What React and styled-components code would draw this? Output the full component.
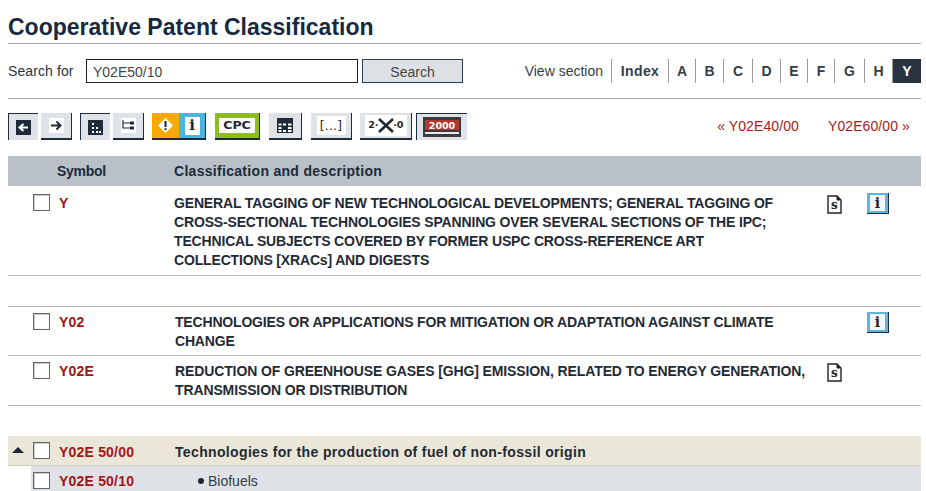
import React from "react";
import styled, { createGlobalStyle } from "styled-components";

const Global = createGlobalStyle`
  html, body { margin: 0; padding: 0; background: #fff; overflow: hidden; }
  body { font-family: "Liberation Sans", Arial, sans-serif; color: #1f2a36; }
`;
const Page = styled.div`
  width: 913px; height: 491px; overflow: hidden; margin-left: 8px;
`;
const Title = styled.h1`
  margin: 0; height: 44px; box-sizing: border-box; padding-top: 14px;
  font-size: 23px; line-height: 27px; font-weight: 700; color: #15293f;
  border-bottom: 1px solid #aaa;
  white-space: nowrap;
`;
const SearchBar = styled.div`
  height: 55px; box-sizing: border-box; border-bottom: 1px solid #aaa;
  display: flex; align-items: flex-start; padding-top: 15px;
`;
const SearchLabel = styled.span`
  width: 78px; font-size: 14px; line-height: 24px; height: 24px; letter-spacing: 0.1px; color: #2a3440;
`;
const SearchInput = styled.div`
  width: 272px; height: 24px; box-sizing: border-box; border: 1px solid #15202b;
  font-size: 14px; line-height: 24px; padding-left: 6px; color: #444;
`;
const SearchButton = styled.div`
  margin-left: 4px; width: 101px; height: 24px; box-sizing: border-box;
  border: 1px solid #2c3e50; background: #dde1e6; color: #444;
  font-size: 14px; line-height: 24px; text-align: center;
`;
const Sections = styled.div`
  margin-left: auto; display: flex; align-items: center; height: 24px;
`;
const SectionLabel = styled.span`
  font-size: 14px; color: #333d48; padding-right: 8px; line-height: 25px;
  border-right: 1px solid #999; height: 24px;
`;
const SectionLink = styled.span`
  font-size: 14px; font-weight: 700; height: 24px; line-height: 25px; text-align: center;
  box-sizing: border-box; width: ${p => p.$w}px; letter-spacing: ${p => p.$sp || 0}px;
  color: ${p => (p.$active ? "#fff" : "#333d48")};
  background: ${p => (p.$active ? "#2a3340" : "transparent")};
  border-right: ${p => (p.$active ? "0" : "1px solid #999")};
`;
const ToolRow = styled.div`
  height: 57px; box-sizing: border-box; padding-top: 14px; display: flex; align-items: flex-start;
`;
const Tool = styled.div`
  height: 27px; box-sizing: border-box; width: ${p => p.$w}px; margin-left: ${p => p.$ml || 0}px;
  background: ${p => p.$bg || "#dfe3e8"};
  display: flex; align-items: center; justify-content: center; flex: none;
  ${p => p.$on
    ? "border-top: 1px solid #1d2b3a; border-left: 1px solid #1d2b3a;"
    : `border-bottom: 2px solid #1d2b3a; border-right: ${p.$noEdge ? 0 : "1px solid #1d2b3a"};`}
`;
const WhiteTile = styled.div`
  background: #fff; width: ${p => p.$w}px; height: ${p => p.$h}px;
  display: flex; align-items: center; justify-content: center; gap: ${p => p.$gap || 0}px;
  font-weight: 700; font-size: ${p => p.$fs || 11}px; color: #1c2732; line-height: 1;
`;
const Serif = styled.span`
  font-family: "DejaVu Serif", serif; font-weight: 700;
`;
const Wide = styled.span`
  display: inline-block; font-family: "DejaVu Sans", sans-serif; font-weight: 700;
  transform: scaleX(${p => p.$stretch || 1});
`;
const Ellipsis = styled.span`
  font-family: "DejaVu Sans", sans-serif; font-weight: 400; font-size: 12px; color: #1c2732; letter-spacing: 0.3px;
`;
const Pager = styled.div`
  margin-left: auto; display: flex; gap: 29px; padding: 5px 11px 0 0; font-size: 14px; color: #a31d1d;
  line-height: 16px; letter-spacing: 0.1px;
`;
const HeadRow = styled.div`
  height: 30px; background: #b9c0c7; display: grid; grid-template-columns: 49px 117px 1fr;
  font-size: 14px; font-weight: 700; line-height: 31px; color: #1d2b3a;
`;
const HeadCell = styled.span`
  letter-spacing: ${p => p.$sp}px;
`;
const Row = styled.div`
  display: grid; grid-template-columns: 51px 115px 653px 40px 46px;
  height: ${p => p.$h}px; box-sizing: border-box; padding-top: ${p => p.$pt || 6}px;
  border-bottom: 1px solid ${p => p.$line || "#bbb"};
  border-top: ${p => (p.$topLine ? "1px solid #bbb" : "0")};
  margin-top: ${p => p.$mt || 0}px;
`;
const TintRow = styled(Row)`
  background: ${p => p.$bg}; margin-left: ${p => p.$ml || 0}px;
  grid-template-columns: ${p => (p.$ml ? "28px 115px 651px" : "51px 115px 651px")};
`;
const CheckCell = styled.div`
  position: relative; padding-left: ${p => p.$pl ?? 25}px;
`;
const Check = styled.div`
  width: 17px; height: 17px; box-sizing: border-box; background: #fff;
  border: 1px solid #666; box-shadow: inset 1px 1px 0 #ccc;
  margin-top: ${p => p.$up ? -p.$up : 0}px;
`;
const Caret = styled.div`
  position: absolute; left: 4px; top: 4px; width: 0; height: 0;
  border-left: 6px solid transparent; border-right: 6px solid transparent; border-bottom: 6px solid #1c2732;
`;
const Symbol = styled.div`
  font-size: 14px; font-weight: 700; color: #a31515; line-height: 19px; letter-spacing: 0.2px;
`;
const Desc = styled.div`
  font-size: 14px; font-weight: 700; line-height: 19px; color: #1f2a36;
  letter-spacing: ${p => p.$sp || 0}px; padding-left: ${p => p.$pl || 0}px; white-space: nowrap;
`;
const Plain = styled.div`
  font-size: 14px; line-height: 19px; color: #333d48; padding-left: 24px;
`;
const Bullet = styled.span`
  display: inline-block; width: 6px; height: 6px; border-radius: 50%; background: #1c2732;
  margin-right: 4px; vertical-align: 2px;
`;
const Cell = styled.div``;
const InfoBadge = styled.div`
  width: 22px; height: 21px; box-sizing: border-box; background: #5fb5dc;
  border-bottom: 1px solid #1d2b3a; border-right: 1px solid #1d2b3a;
  display: flex; align-items: center; justify-content: center; margin-top: -1px;
`;
const InfoTile = styled.div`
  width: 15px; height: 16px; background: #f2f6f8; text-align: center; color: #1c2732;
  font-size: 14px; line-height: 16px;
`;
const DocShape = styled.div`
  position: relative; width: 15px; height: 20px; margin-top: 1px;
`;
const DocLetter = styled.span`
  position: absolute; left: 0; right: 0; top: 3px; text-align: center; font-size: 12px; line-height: 15px;
  font-family: "DejaVu Serif", serif; font-weight: 700; color: #1c2732;
`;

const Doc = () => (
  <DocShape>
    <svg width="15" height="20" viewBox="0 0 15 20">
      <path d="M1 1H10L14 5V18H1Z" fill="#fff" stroke="#222" strokeWidth="1.4" />
      <path d="M10 1V5H14" fill="#222" stroke="#222" />
    </svg>
    <DocLetter>s</DocLetter>
  </DocShape>
);
const Info = () => (
  <InfoBadge><InfoTile><Serif>i</Serif></InfoTile></InfoBadge>
);

export default function App() {
  const letters = [["A", 27], ["B", 28], ["C", 29], ["D", 28], ["E", 27], ["F", 27], ["G", 30], ["H", 28]];
  return (
    <Page>
      <Global />
      <Title>Cooperative Patent Classification</Title>
      <SearchBar>
        <SearchLabel>Search for</SearchLabel>
        <SearchInput>Y02E50/10</SearchInput>
        <SearchButton>Search</SearchButton>
        <Sections>
          <SectionLabel>View section</SectionLabel>
          <SectionLink $w={57} $sp={0.4}>Index</SectionLink>
          {letters.map(([l, w]) => <SectionLink key={l} $w={w}>{l}</SectionLink>)}
          <SectionLink $w={28} $active>Y</SectionLink>
        </Sections>
      </SearchBar>
      <ToolRow>
        <Tool $w={30} $on>
          <svg width="15" height="15" viewBox="0 0 15 15"><rect width="15" height="15" fill="#1d2b3a" /><path d="M12 7.5H5M7.5 4L3.5 7.5L7.5 11" stroke="#fff" strokeWidth="2" fill="none" /></svg>
        </Tool>
        <Tool $w={31} $ml={3}>
          <WhiteTile $w={15} $h={15}><svg width="13" height="11" viewBox="0 0 13 11"><path d="M1 5.5H10M6.5 1.5L10.5 5.5L6.5 9.5" stroke="#1d2b3a" strokeWidth="2" fill="none" /></svg></WhiteTile>
        </Tool>
        <Tool $w={30} $ml={8} $on>
          <svg width="15" height="15" viewBox="0 0 15 15"><rect width="15" height="15" fill="#1d2b3a" /><path d="M4 3h2v2H4zM4 7h2v2H4zM8 7h2v2H8zM4 11h2v2H4zM8 11h2v2H8zM11 11h2v2h-2z" fill="#fff" /></svg>
        </Tool>
        <Tool $w={31} $ml={3}>
          <WhiteTile $w={15} $h={15}><svg width="13" height="11" viewBox="0 0 13 11"><path d="M1 0V8H8M1 3H8" stroke="#1d2b3a" strokeWidth="1.2" fill="none" /><rect x="8" y="1.5" width="4" height="3" fill="#1d2b3a" /><rect x="8" y="6.5" width="4" height="3" fill="#1d2b3a" /></svg></WhiteTile>
        </Tool>
        <Tool $w={27} $ml={8} $bg="#f8a900" $noEdge>
          <svg width="17" height="17" viewBox="0 0 17 17"><path d="M8.5 1L16 8.5L8.5 16L1 8.5Z" fill="#fff" /><path d="M8.5 4V10M8.5 11.2V13" stroke="#1c2732" strokeWidth="2" /></svg>
        </Tool>
        <Tool $w={27} $bg="#4cb3dd">
          <WhiteTile $w={15} $h={18} $fs={15}><Serif>i</Serif></WhiteTile>
        </Tool>
        <Tool $w={45} $ml={9} $bg="#8dbb22">
          <WhiteTile $w={36} $h={15} $fs={10}><Wide $stretch={1.25}>CPC</Wide></WhiteTile>
        </Tool>
        <Tool $w={33} $ml={9}>
          <svg width="16" height="15" viewBox="0 0 16 15"><rect width="16" height="15" fill="#1d2b3a" /><path d="M1.5 5.5h3v2h-3zM6 5.5h3v2H6zM11 5.5h3.5v2H11zM1.5 9h3v2h-3zM11 9h3.5v2H11zM1.5 12h3v2h-3zM6 12h3v2H6zM11 12h3.5v2H11z" fill="#fff" /></svg>
        </Tool>
        <Tool $w={41} $ml={9}>
          <WhiteTile $w={29} $h={19}><Ellipsis>[...]</Ellipsis></WhiteTile>
        </Tool>
        <Tool $w={52} $ml={8}>
          <WhiteTile $w={42} $h={21} $fs={8}>
            <Wide $stretch={1.2}>2·</Wide>
            <svg width="16" height="15" viewBox="0 0 16 15"><path d="M1 1L15 14M15 1L1 14" stroke="#1c2732" strokeWidth="2.6" /></svg>
            <Wide $stretch={1.2}>·0</Wide>
          </WhiteTile>
        </Tool>
        <Tool $w={51} $ml={4} $on>
          <svg width="38" height="20" viewBox="0 0 38 20"><rect width="38" height="20" fill="#3a3a40" /><rect x="2" y="3" width="34" height="10" fill="#b03a30" /><rect x="2" y="15" width="34" height="2" fill="#e8e8e8" /><text x="19" y="11.6" textAnchor="middle" fontSize="9.5" fontWeight="700" fontFamily="DejaVu Sans" fill="#fff">2000</text></svg>
        </Tool>
        <Pager>
          <span>« Y02E40/00</span>
          <span>Y02E60/00 »</span>
        </Pager>
      </ToolRow>
      <HeadRow>
        <span />
        <HeadCell $sp={-0.3}>Symbol</HeadCell>
        <HeadCell $sp={0.3}>Classification and description</HeadCell>
      </HeadRow>
      <Row $h={90} $pt={8}>
        <CheckCell><Check /></CheckCell>
        <Symbol>Y</Symbol>
        <Desc $sp={-0.16}>GENERAL TAGGING OF NEW TECHNOLOGICAL DEVELOPMENTS; GENERAL TAGGING OF<br />CROSS-SECTIONAL TECHNOLOGIES SPANNING OVER SEVERAL SECTIONS OF THE IPC;<br />TECHNICAL SUBJECTS COVERED BY FORMER USPC CROSS-REFERENCE ART<br />COLLECTIONS [XRACs] AND DIGESTS</Desc>
        <Cell><Doc /></Cell>
        <Cell><Info /></Cell>
      </Row>
      <Row $h={50} $mt={30} $topLine>
        <CheckCell><Check /></CheckCell>
        <Symbol>Y02</Symbol>
        <Desc $sp={-0.18} $pl={1}>TECHNOLOGIES OR APPLICATIONS FOR MITIGATION OR ADAPTATION AGAINST CLIMATE<br />CHANGE</Desc>
        <Cell />
        <Cell><Info /></Cell>
      </Row>
      <Row $h={50}>
        <CheckCell><Check /></CheckCell>
        <Symbol>Y02E</Symbol>
        <Desc $sp={-0.12} $pl={1}>REDUCTION OF GREENHOUSE GASES [GHG] EMISSION, RELATED TO ENERGY GENERATION,<br />TRANSMISSION OR DISTRIBUTION</Desc>
        <Cell><Doc /></Cell>
        <Cell />
      </Row>
      <TintRow $h={30} $mt={30} $pt={7} $bg="#eae7d9" $line="#cfcdc0">
        <CheckCell><Caret /><Check $up={1} /></CheckCell>
        <Symbol>Y02E 50/00</Symbol>
        <Desc $sp={0.35} $pl={1}>Technologies for the production of fuel of non-fossil origin</Desc>
      </TintRow>
      <TintRow $h={25} $ml={23} $bg="#dfe3e8" $line="#dfe3e8" $pt={6}>
        <CheckCell $pl={2}><Check /></CheckCell>
        <Symbol>Y02E 50/10</Symbol>
        <Plain><Bullet />Biofuels</Plain>
      </TintRow>
    </Page>
  );
}
